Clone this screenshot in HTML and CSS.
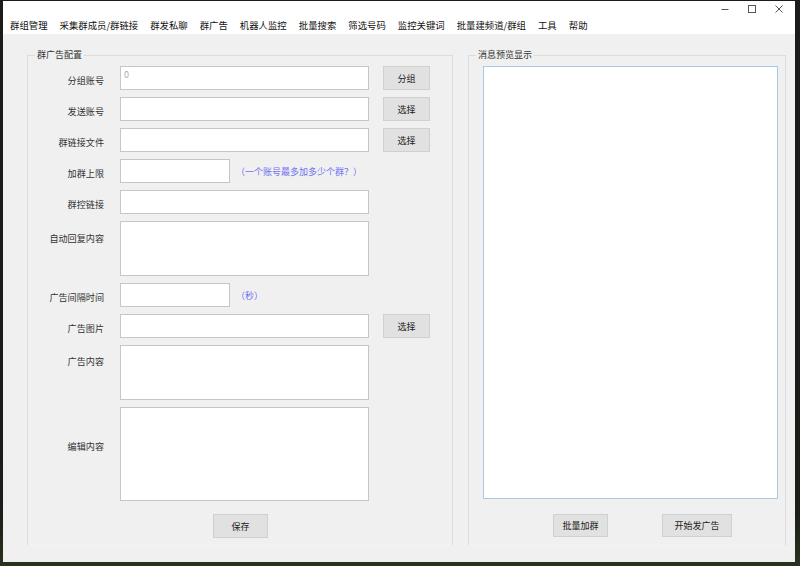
FILE: index.html
```html
<!DOCTYPE html>
<html lang="zh">
<head>
<meta charset="utf-8">
<title>群广告</title>
<link rel="stylesheet" href="styles.css">
</head>
<body>
<div class="window">
  <div class="titlebar">
    <span class="tb-btn">
      <svg width="10" height="10" viewBox="0 0 10 10"><path d="M1.5 5.5h7" stroke="#555" stroke-width="1"/></svg>
    </span>
    <span class="tb-btn">
      <svg width="10" height="10" viewBox="0 0 10 10"><rect x="1.5" y="1.5" width="7" height="7" fill="none" stroke="#555" stroke-width="1"/></svg>
    </span>
    <span class="tb-btn">
      <svg width="10" height="10" viewBox="0 0 10 10"><path d="M1.5 1.5l7 7M8.5 1.5l-7 7" stroke="#555" stroke-width="1"/></svg>
    </span>
  </div>
  <nav class="menubar">
    <span class="menu-item">群组管理</span>
    <span class="menu-item">采集群成员/群链接</span>
    <span class="menu-item">群发私聊</span>
    <span class="menu-item">群广告</span>
    <span class="menu-item">机器人监控</span>
    <span class="menu-item">批量搜索</span>
    <span class="menu-item">筛选号码</span>
    <span class="menu-item">监控关键词</span>
    <span class="menu-item">批量建频道/群组</span>
    <span class="menu-item">工具</span>
    <span class="menu-item">帮助</span>
  </nav>
  <main class="content">
    <section class="group group-config">
      <span class="group-title">群广告配置</span>
      <div class="form">
        <label class="lbl">分组账号</label>
        <input class="field field-zero" placeholder="0">
        <button class="btn btn-side">分组</button>

        <label class="lbl">发送账号</label>
        <input class="field">
        <button class="btn btn-side">选择</button>

        <label class="lbl">群链接文件</label>
        <input class="field">
        <button class="btn btn-side">选择</button>

        <label class="lbl">加群上限</label>
        <div class="short-row"><input class="field field-short"><span class="hint">（一个账号最多加多少个群？）</span></div>
        <span></span>

        <label class="lbl">群控链接</label>
        <input class="field">
        <span></span>

        <label class="lbl lbl-top lbl-reply">自动回复内容</label>
        <textarea class="area area-mid"></textarea>
        <span></span>

        <label class="lbl">广告间隔时间</label>
        <div class="short-row"><input class="field field-short"><span class="hint">（秒）</span></div>
        <span></span>

        <label class="lbl">广告图片</label>
        <input class="field">
        <button class="btn btn-side">选择</button>

        <label class="lbl lbl-top lbl-ad">广告内容</label>
        <textarea class="area area-mid"></textarea>
        <span></span>

        <label class="lbl lbl-top lbl-edit">编辑内容</label>
        <textarea class="area area-big"></textarea>
        <span></span>
      </div>
      <div class="save-row"><button class="btn btn-save">保存</button></div>
    </section>
    <section class="group group-preview">
      <span class="group-title">消息预览显示</span>
      <textarea class="preview"></textarea>
      <div class="preview-actions">
        <button class="btn btn-join">批量加群</button>
        <button class="btn btn-start">开始发广告</button>
      </div>
    </section>
  </main>
</div>
</body>
</html>
```
FILE: styles.css
```css
* { box-sizing: border-box; }
html, body { margin: 0; padding: 0; }
body {
  width: 800px;
  height: 566px;
  overflow: hidden;
  background: linear-gradient(180deg, #1b1b1b 0%, #1a1d18 90%, #28331e 100%);
  font-family: "Noto Sans CJK SC", "Noto Sans", sans-serif;
  padding: 1px 0 0 3px;
}
.window {
  width: 792px;
  height: 561px;
  background: #f0f0f0;
  display: flex;
  flex-direction: column;
}
.titlebar {
  height: 16px;
  background: #fff;
  display: flex;
  justify-content: flex-end;
  align-items: center;
  padding-right: 11px;
  gap: 17px;
}
.tb-btn { width: 10px; height: 10px; display: flex; }
.menubar {
  height: 17px;
  background: #fff;
  display: flex;
  align-items: center;
  padding-left: 1px;
  font-size: 9.4px;
  color: #111;
}
.menu-item { padding: 0 6px; white-space: nowrap; line-height: 17px; }
.content {
  flex: 1;
  display: flex;
  gap: 15px;
  padding: 21px 9px 16px 24px;
}
.group {
  position: relative;
  border: 1px solid #dcdcdc;
  border-bottom-color: #f4f4f4;
}
.group-title {
  position: absolute;
  top: -7px;
  left: 7px;
  padding: 0 2px;
  background: #f0f0f0;
  font-size: 9px;
  line-height: 12px;
  color: #333;
}
.group-config { width: 426px; padding-top: 10px; }
.group-preview { flex: 1; padding: 10px 7px 0 14px; }
.form {
  display: grid;
  grid-template-columns: 76px 250px 47px;
  column-gap: 15px;
  row-gap: 7px;
  align-items: center;
}
.form > .field,
.form > .area,
.form > .short-row { margin-left: 1px; }
.form > .btn-side { margin-left: -1px; }
.lbl {
  text-align: right;
  font-size: 9.1px;
  color: #333;
  line-height: 12px;
  padding-top: 3px;
  white-space: nowrap;
}
.lbl-top { align-self: start; }
.lbl-reply { padding-top: 11px; }
.lbl-ad { padding-top: 10px; }
.lbl-edit { padding-top: 33px; }
.field, .area, .preview {
  display: block;
  border: 1px solid #c6c6c6;
  background: #fff;
  font-family: inherit;
  font-size: 9px;
  outline: none;
  margin: 0;
  resize: none;
}
.field { height: 24px; width: 249px; padding: 0 3px; }
.field-zero { padding: 0 3px 8px; }
.field-zero::placeholder { color: #aaa; }
.field-short { width: 110px; }
.short-row { display: flex; align-items: center; }
.hint {
  margin-left: 6px;
  font-size: 9px;
  color: #7272f2;
  white-space: nowrap;
}
.area { width: 249px; }
.area-mid { height: 55px; }
.area-big { height: 94px; }
.btn {
  font-family: inherit;
  font-size: 9px;
  color: #222;
  background: #e1e1e1;
  border: 1px solid #d0d0d0;
  padding: 0;
  margin: 0;
  height: 24px;
}
.btn-side { width: 47px; }
.save-row { display: flex; justify-content: center; margin-top: 13px; padding-left: 1px; }
.btn-save { width: 55px; }
.preview {
  width: 295px;
  height: 433px;
  border-color: #a7cbeb;
}
.preview-actions {
  display: flex;
  gap: 54px;
  margin-top: 15px;
  padding-left: 70px;
}
.btn-join { width: 55px; height: 23px; }
.btn-start { width: 70px; height: 23px; }
```
